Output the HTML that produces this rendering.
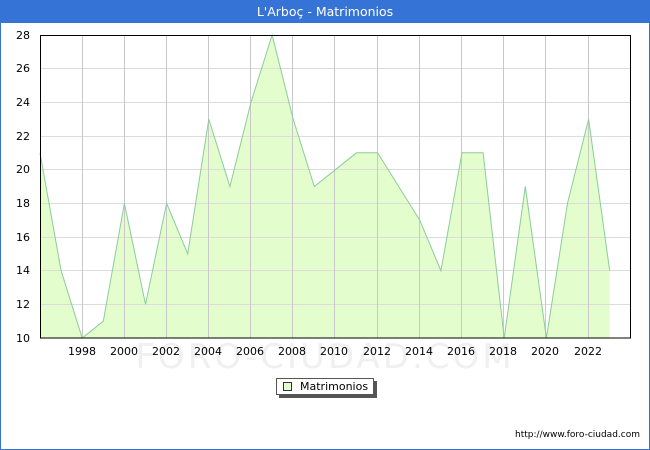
<!DOCTYPE html>
<html><head><meta charset="utf-8"><style>
html,body{margin:0;padding:0;background:#fff;}
body{width:650px;height:450px;overflow:hidden;font-family:"DejaVu Sans","Liberation Sans",sans-serif;}
</style></head><body>
<svg width="650" height="450" xmlns="http://www.w3.org/2000/svg" style="display:block">
<rect x="0.5" y="0.5" width="649" height="449" fill="#fff" stroke="#3573d6"/>
<rect x="0" y="0" width="650" height="23" fill="#3573d6"/>
<text x="325" y="16" fill="#fff" font-size="12.5" text-anchor="middle" font-family="DejaVu Sans, sans-serif">L'Arboç - Matrimonios</text>
<text x="325" y="368" fill="#f0f0f0" font-size="34" text-anchor="middle" font-family="DejaVu Sans, sans-serif" letter-spacing="3">FORO-CIUDAD.COM</text>
<polygon fill="#e4fdcc" stroke="none" points="40,338 40,152.8 61.1,270.7 82.2,338 103.3,321.2 124.4,203.3 145.5,304.3 166.6,203.3 187.7,253.8 208.8,119.2 229.9,186.5 251,102.3 272.1,35 293.2,119.2 314.3,186.5 335.4,169.7 356.5,152.8 377.6,152.8 398.7,186.5 419.8,220.2 440.9,270.7 462,152.8 483.1,152.8 504.2,338 525.3,186.5 546.4,338 567.5,203.3 588.6,119.2 609.7,270.7 609.7,338"/>
<g stroke="#dcdcdc" stroke-width="1">
<line x1="40" y1="304.5" x2="631" y2="304.5"/><line x1="40" y1="270.5" x2="631" y2="270.5"/>
<line x1="40" y1="237.5" x2="631" y2="237.5"/><line x1="40" y1="203.5" x2="631" y2="203.5"/>
<line x1="40" y1="169.5" x2="631" y2="169.5"/><line x1="40" y1="136.5" x2="631" y2="136.5"/>
<line x1="40" y1="102.5" x2="631" y2="102.5"/><line x1="40" y1="68.5" x2="631" y2="68.5"/>
</g>
<g stroke="#c8c8c8" stroke-width="1">
<line x1="82.5" y1="35" x2="82.5" y2="338"/><line x1="124.5" y1="35" x2="124.5" y2="338"/>
<line x1="166.5" y1="35" x2="166.5" y2="338"/><line x1="208.5" y1="35" x2="208.5" y2="338"/>
<line x1="250.5" y1="35" x2="250.5" y2="338"/><line x1="292.5" y1="35" x2="292.5" y2="338"/>
<line x1="334.5" y1="35" x2="334.5" y2="338"/><line x1="377.5" y1="35" x2="377.5" y2="338"/>
<line x1="419.5" y1="35" x2="419.5" y2="338"/><line x1="461.5" y1="35" x2="461.5" y2="338"/>
<line x1="503.5" y1="35" x2="503.5" y2="338"/><line x1="545.5" y1="35" x2="545.5" y2="338"/>
<line x1="588.5" y1="35" x2="588.5" y2="338"/>
</g>
<polyline fill="none" stroke="#8ccc9c" stroke-width="1" points="40,152.8 61.1,270.7 82.2,338 103.3,321.2 124.4,203.3 145.5,304.3 166.6,203.3 187.7,253.8 208.8,119.2 229.9,186.5 251,102.3 272.1,35 293.2,119.2 314.3,186.5 335.4,169.7 356.5,152.8 377.6,152.8 398.7,186.5 419.8,220.2 440.9,270.7 462,152.8 483.1,152.8 504.2,338 525.3,186.5 546.4,338 567.5,203.3 588.6,119.2 609.7,270.7"/>
<rect x="40.5" y="35.5" width="590" height="302.5" fill="none" stroke="#000" stroke-width="1"/>
<g font-size="11" fill="#000" text-anchor="end">
<text x="30" y="342">10</text><text x="30" y="308">12</text><text x="30" y="274">14</text>
<text x="30" y="241">16</text><text x="30" y="207">18</text><text x="30" y="173">20</text>
<text x="30" y="140">22</text><text x="30" y="106">24</text><text x="30" y="72">26</text><text x="30" y="39">28</text>
</g>
<g font-size="11" fill="#000" text-anchor="middle">
<text x="82" y="355">1998</text><text x="124" y="355">2000</text><text x="166" y="355">2002</text>
<text x="208" y="355">2004</text><text x="250" y="355">2006</text><text x="292" y="355">2008</text>
<text x="334" y="355">2010</text><text x="377" y="355">2012</text><text x="419" y="355">2014</text>
<text x="461" y="355">2016</text><text x="503" y="355">2018</text><text x="545" y="355">2020</text>
<text x="588" y="355">2022</text>
</g>
<rect x="279" y="381" width="98" height="17" fill="#555"/>
<rect x="276.5" y="378.5" width="97" height="16" fill="#fff" stroke="#555"/>
<rect x="283.5" y="382.5" width="8" height="8" fill="#e4fdcc" stroke="#333"/>
<text x="300" y="390" font-size="11" fill="#000">Matrimonios</text>
<text x="640" y="437" font-size="9" fill="#000" text-anchor="end">http://www.foro-ciudad.com</text>
</svg>
</body></html>
